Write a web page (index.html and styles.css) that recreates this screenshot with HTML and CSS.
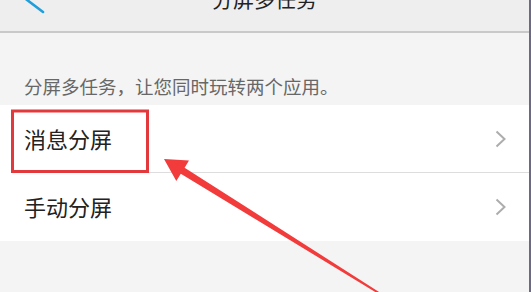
FILE: index.html
```html
<!DOCTYPE html>
<html>
<head>
    <title>分屏多任务</title>
    <meta charset="utf-8">
    <link rel="stylesheet" href="styles.css">
</head>
<body>
    <div class="screen">
        <div class="header">
            <div class="back">
                <svg width="24" height="32" viewBox="0 0 24 32">
                    <polyline points="21,1 2.5,16 21,30" fill="none" stroke="#1e9fdb" stroke-width="2.6" stroke-linecap="round" stroke-linejoin="round"/>
                </svg>
            </div>
            <div class="title">分屏多任务</div>
            <div></div>
        </div>
        <div class="desc">
            <span>分屏多任务，让您同时玩转两个应用。</span>
        </div>
        <div class="list">
            <div class="row">
                <span>消息分屏</span>
                <svg class="arrow-right" width="11" height="18" viewBox="0 0 11 18">
                    <polyline points="1.5,1.5 9.5,9 1.5,16.5" fill="none" stroke="#adadad" stroke-width="2"/>
                </svg>
            </div>
            <div class="divider"></div>
            <div class="row">
                <span>手动分屏</span>
                <svg class="arrow-right" width="11" height="18" viewBox="0 0 11 18">
                    <polyline points="1.5,1.5 9.5,9 1.5,16.5" fill="none" stroke="#adadad" stroke-width="2"/>
                </svg>
            </div>
        </div>
        <svg class="marks" width="531" height="292" viewBox="0 0 531 292">
            <rect x="12.5" y="111" width="135" height="60.5" fill="none" stroke="#e23a3c" stroke-width="3"/>
            <polygon points="164,159 189,160.5 184.6,167.7 382.5,294.2 381.5,295.8 180.8,173.7 176.3,180.9" fill="#f23b3b"/>
        </svg>
    </div>
</body>
</html>
```

FILE: styles.css
```css
body {
    margin: 0;
    padding: 0;
    background-color: #f4f4f4;
    font-family: "Noto Sans CJK SC", "Noto Sans", sans-serif;
}

.screen {
    position: relative;
    width: 529px;
    height: 292px;
    overflow: hidden;
    border-right: 2px solid #6c6981;
    background-color: #f4f4f4;
}

.header {
    display: grid;
    grid-template-columns: 1fr auto 1fr;
    align-items: center;
    height: 66px;
    margin-top: -35px;
    padding-left: 22px;
    padding-right: 22px;
    background-color: #eeeeee;
    border-bottom: 2px solid #c9c9c9;
}

.back svg {
    display: block;
}

.title {
    font-size: 21px;
    line-height: 21px;
    color: #222;
}

.desc {
    display: flex;
    align-items: flex-end;
    height: 72px;
    box-sizing: border-box;
    padding-left: 24px;
    padding-bottom: 10px;
    font-size: 18.5px;
    line-height: 18px;
    color: #676767;
}

.list {
    background-color: #fff;
}

.row {
    display: flex;
    align-items: center;
    justify-content: space-between;
    height: 68px;
    padding-left: 24px;
    padding-right: 23px;
    font-size: 22px;
    color: #222;
}

.row span {
    margin-top: -2px;
}

.arrow-right {
    display: block;
}

.divider {
    height: 1px;
    margin-left: 24px;
    margin-top: -1px;
    background-color: #dddddd;
}

.marks {
    position: absolute;
    top: 0;
    left: 0;
    pointer-events: none;
}
```
